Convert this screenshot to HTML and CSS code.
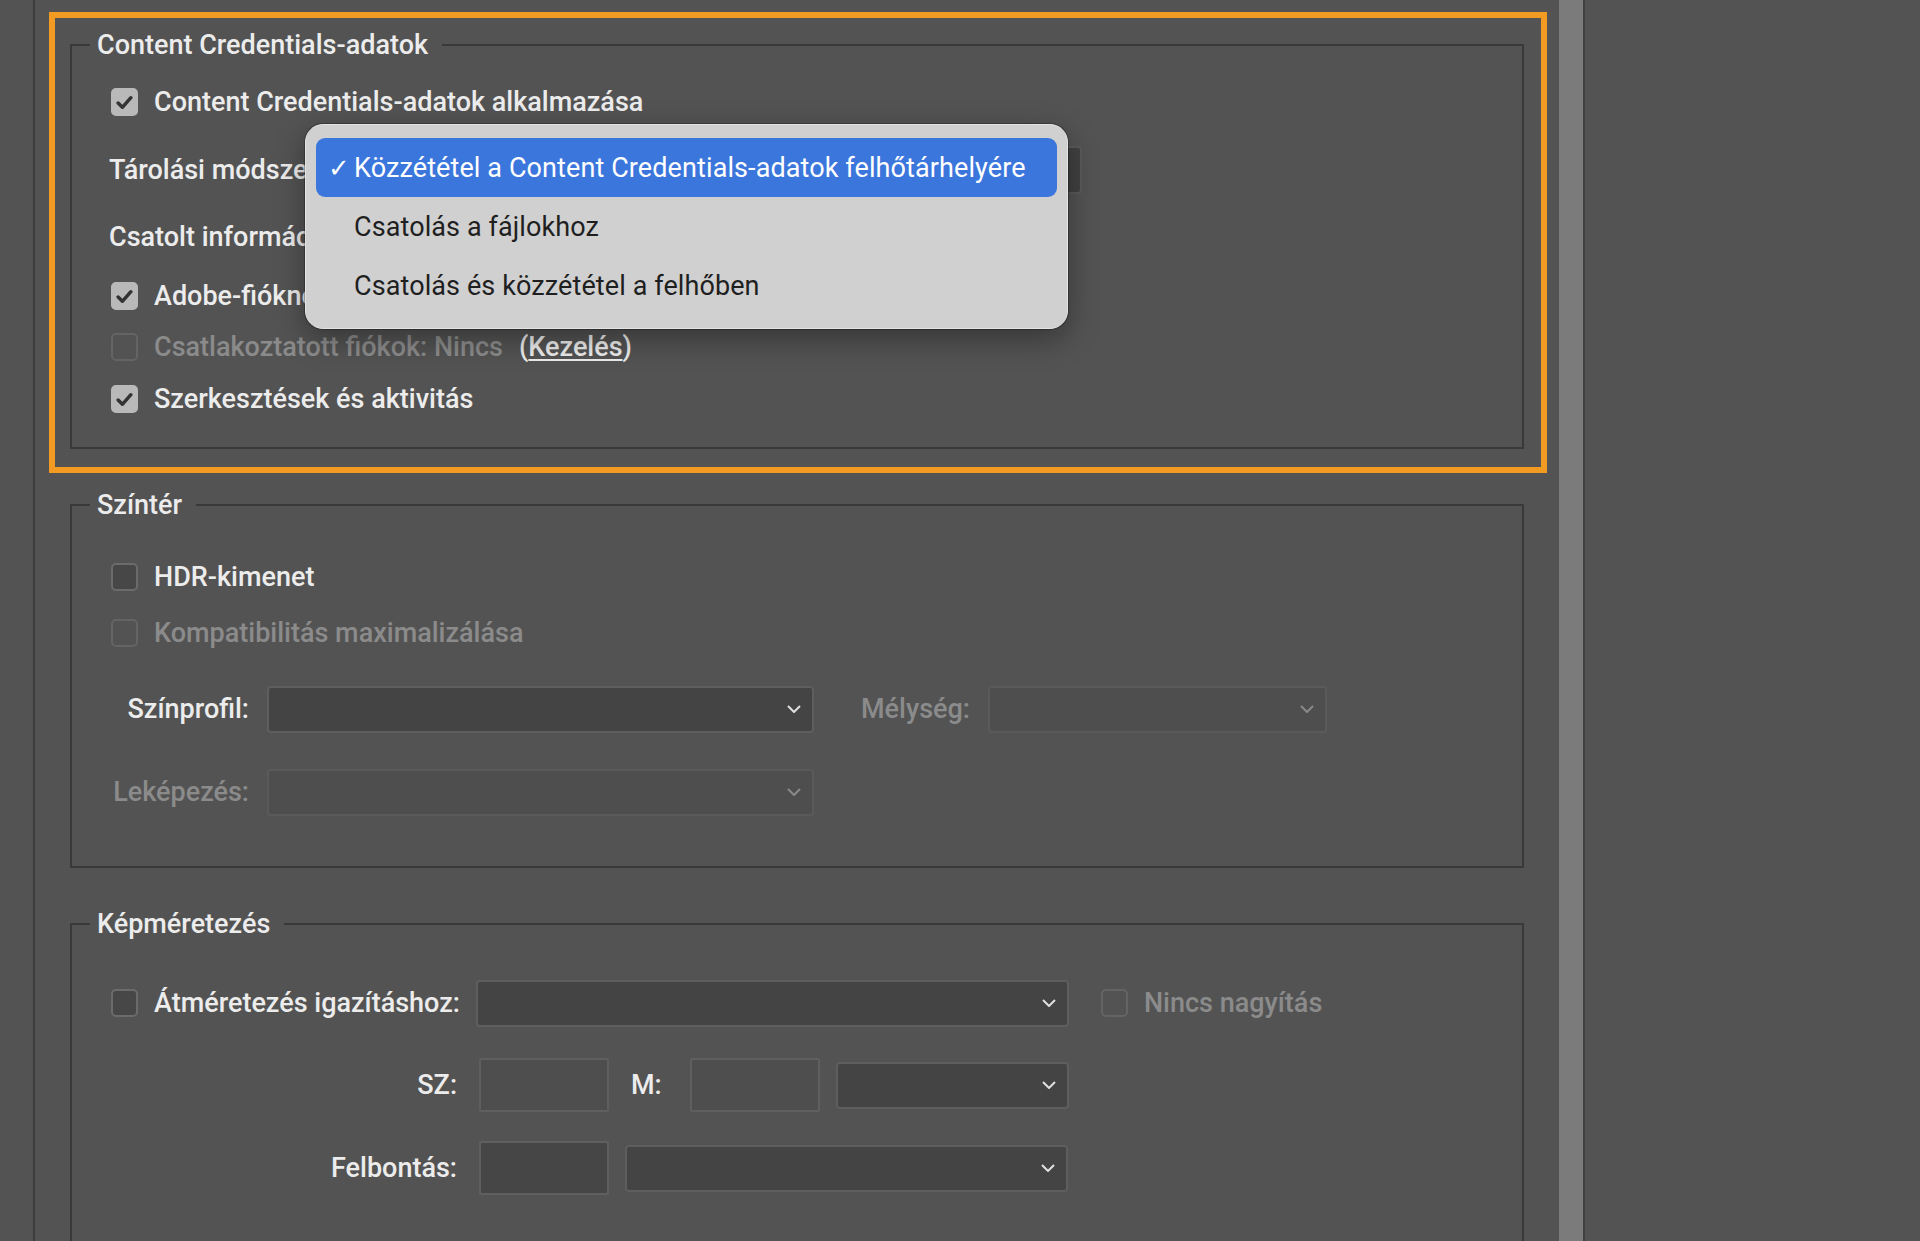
FILE: index.html
```html
<!DOCTYPE html>
<html lang="hu">
<head>
    <meta charset="UTF-8">
    <meta name="viewport" content="width=device-width, initial-scale=1.0">
    <title>Exportálási beállítások</title>
    <link rel="stylesheet" href="styles.css">
</head>
<body>
    <div class="app">
        <div class="gutter"></div>

        <div class="dialog">
            <div class="highlight">
                <fieldset class="group first">
                    <legend>Content Credentials-adatok</legend>
                    <div class="rows">
                        <div class="row r1">
                            <span class="box checked"><svg viewBox="0 0 16 14"><path d="M2 7.5 L6 11.5 L14 2.5"/></svg></span>
                            Content Credentials-adatok alkalmazása
                        </div>
                        <div class="row r2">
                            <span class="row-label">Tárolási módszer:</span>
                            <div class="popup"></div>
                        </div>
                        <div class="row r3">
                            <span class="row-label">Csatolt információk:</span>
                        </div>
                        <div class="row r4">
                            <span class="box checked"><svg viewBox="0 0 16 14"><path d="M2 7.5 L6 11.5 L14 2.5"/></svg></span>
                            Adobe-fióknév
                        </div>
                        <div class="row r5">
                            <span class="box off"></span>
                            <span class="disabled">Csatlakoztatott fiókok: Nincs</span>
                            <span class="manage">(<u>Kezelés</u>)</span>
                        </div>
                        <div class="row r6">
                            <span class="box checked"><svg viewBox="0 0 16 14"><path d="M2 7.5 L6 11.5 L14 2.5"/></svg></span>
                            Szerkesztések és aktivitás
                        </div>
                    </div>
                </fieldset>

                <!-- a Tárolási módszer legördülő menüje, nyitva -->
                <div class="menu">
                    <div class="menu-item selected"><span class="tick">✓</span>Közzététel a Content Credentials-adatok felhőtárhelyére</div>
                    <div class="menu-item"><span class="tick"></span>Csatolás a fájlokhoz</div>
                    <div class="menu-item"><span class="tick"></span>Csatolás és közzététel a felhőben</div>
                </div>
            </div>

            <fieldset class="group section">
                <legend>Színtér</legend>
                <div class="rows">
                    <div class="row hdr">
                        <span class="box"></span>
                        HDR-kimenet
                    </div>
                    <div class="row compat">
                        <span class="box off"></span>
                        <span class="disabled">Kompatibilitás maximalizálása</span>
                    </div>
                    <div class="row field profile">
                        <span class="field-label">Színprofil:</span>
                        <div class="select profile-select"><svg class="chev" viewBox="0 0 14 8"><path d="M1 1 L7 7 L13 1"/></svg></div>
                        <span class="depth-label disabled">Mélység:</span>
                        <div class="select off depth-select"><svg class="chev" viewBox="0 0 14 8"><path d="M1 1 L7 7 L13 1"/></svg></div>
                    </div>
                    <div class="row field mapping">
                        <span class="field-label disabled">Leképezés:</span>
                        <div class="select off profile-select"><svg class="chev" viewBox="0 0 14 8"><path d="M1 1 L7 7 L13 1"/></svg></div>
                    </div>
                </div>
            </fieldset>

            <fieldset class="group section last">
                <legend>Képméretezés</legend>
                <div class="rows">
                    <div class="row field fit">
                        <span class="box"></span>
                        Átméretezés igazításhoz:
                        <div class="select fit-select"><svg class="chev" viewBox="0 0 14 8"><path d="M1 1 L7 7 L13 1"/></svg></div>
                        <span class="box off no-zoom"></span>
                        <span class="disabled">Nincs nagyítás</span>
                    </div>
                    <div class="row size">
                        <span class="size-label">SZ:</span>
                        <div class="input"></div>
                        <span class="m-label">M:</span>
                        <div class="input m-input"></div>
                        <div class="select unit-select"><svg class="chev" viewBox="0 0 14 8"><path d="M1 1 L7 7 L13 1"/></svg></div>
                    </div>
                    <div class="row size res">
                        <span class="size-label">Felbontás:</span>
                        <div class="input dark"></div>
                        <div class="select res-select"><svg class="chev" viewBox="0 0 14 8"><path d="M1 1 L7 7 L13 1"/></svg></div>
                    </div>
                </div>
            </fieldset>
        </div>

        <div class="scrollbar"></div>
        <div class="side"></div>
    </div>
</body>
</html>
```

FILE: styles.css
```css
body {
    margin: 0;
    background-color: #535353;
    font-family: Roboto, "Liberation Sans", sans-serif;
    font-size: 27px;
    font-weight: 500;
    color: #ececec;
}

.app {
    display: flex;
    height: 1241px;
    overflow: hidden;
}

.gutter {
    flex: none;
    width: 33px;
    border-right: 2px solid #3d3d3d;
}

.dialog {
    flex: none;
    width: 1524px;
    padding-top: 12px;
    box-sizing: border-box;
}

.scrollbar {
    flex: none;
    width: 24px;
    background: #7b7b7b;
    border-right: 2px solid #414141;
}

.side {
    flex: 1;
}

/* narancs kiemelés */
.highlight {
    position: relative;
    width: 1498px;
    margin-left: 14px;
    box-sizing: border-box;
    border: 6px solid #f29a22;
    padding: 12px 17px 18px 15px;
}

.group {
    margin: 0;
    padding: 0 0 28px 0;
    border: 2px solid #393939;
    min-width: 0;
}

.group legend {
    margin-left: 18px;
    padding: 0 14px 0 7px;
    line-height: 30px;
}

.section {
    width: 1454px;
    margin: 17px 0 0 35px;
    padding-bottom: 50px;
    box-sizing: border-box;
}

.section + .section {
    margin-top: 41px;
}

.section.last {
    padding-bottom: 120px;
}

.rows {
    padding-left: 37px;
}

.row {
    display: flex;
    align-items: center;
    height: 40px;
    white-space: nowrap;
}

.r1 { margin-top: 22px; }
.r2 { margin-top: 24px; height: 48px; }
.r3 { margin-top: 23px; }
.r4 { margin-top: 19px; }
.r5 { margin-top: 11px; }
.r6 { margin-top: 12px; }

.row-label {
    width: 225px;
}

.popup {
    width: 734px;
    height: 48px;
    margin-left: 14px;
    box-sizing: border-box;
    background: #414141;
    border: 2px solid #5a5a5a;
    border-radius: 4px;
}

.box {
    flex: none;
    display: flex;
    align-items: center;
    justify-content: center;
    width: 27px;
    height: 28px;
    margin: 0 16px 0 2px;
    box-sizing: border-box;
    border: 2px solid #6b6b6b;
    border-radius: 5px;
    background: #474747;
}

.box.checked {
    background: #b9b9b9;
    border-color: #b9b9b9;
}

.box.off {
    background: transparent;
    border-color: #646464;
}

.box svg {
    width: 17px;
    height: 15px;
    fill: none;
    stroke: #333;
    stroke-width: 3.2;
    stroke-linecap: round;
    stroke-linejoin: round;
}

.disabled {
    color: #8b8b8b;
}

.manage {
    margin-left: 16px;
}

.manage u {
    text-underline-offset: 3px;
    text-decoration-thickness: 2px;
}

/* legördülő menü */
.menu {
    position: absolute;
    left: 250px;
    top: 106px;
    width: 763px;
    height: 205px;
    box-sizing: border-box;
    padding: 13px 10px;
    background: #d0d0d0;
    border: 1px solid #e3e3e3;
    border-radius: 18px;
    box-shadow: 0 0 0 1px rgba(0, 0, 0, 0.25), 0 10px 30px rgba(0, 0, 0, 0.35);
}

.menu-item {
    display: flex;
    align-items: center;
    height: 59px;
    padding-left: 12px;
    border-radius: 9px;
    color: #1f1f1f;
    font-weight: 400;
    letter-spacing: 0.1px;
    white-space: nowrap;
}

.menu-item .tick {
    width: 26px;
    font-family: "DejaVu Sans", sans-serif;
    font-size: 26px;
    font-weight: 700;
}

.menu-item.selected {
    background: #3b76dc;
    color: #fff;
}

/* mezők */
.hdr { margin-top: 37px; }
.compat { margin-top: 16px; }
.profile { margin-top: 32px; height: 48px; }
.mapping { margin-top: 35px; height: 48px; }

.field-label {
    width: 140px;
    text-align: right;
}

.select {
    flex: none;
    display: flex;
    align-items: center;
    justify-content: flex-end;
    height: 47px;
    padding-right: 11px;
    box-sizing: border-box;
    background: #444;
    border: 2px solid #5e5e5e;
    border-radius: 4px;
}

.select.off {
    background: #4e4e4e;
    border-color: #5a5a5a;
}

.chev {
    width: 14px;
    height: 8px;
    fill: none;
    stroke: #e0e0e0;
    stroke-width: 2;
}

.select.off .chev {
    stroke: #8a8a8a;
}

.profile-select {
    width: 547px;
    margin-left: 18px;
}

.depth-label {
    margin-left: 47px;
}

.depth-select {
    width: 339px;
    margin-left: 18px;
}

.fit {
    margin-top: 40px;
    height: 48px;
}

.fit-select {
    width: 593px;
    margin-left: 16px;
}

.no-zoom {
    margin-left: 32px;
}

.size {
    margin-top: 31px;
    height: 54px;
}

.size.res {
    margin-top: 29px;
}

.size-label {
    width: 348px;
    text-align: right;
}

.input {
    flex: none;
    width: 130px;
    height: 54px;
    margin-left: 22px;
    box-sizing: border-box;
    background: #4e4e4e;
    border: 2px solid #5f5f5f;
    border-radius: 2px;
}

.input.dark {
    background: #464646;
}

.m-label {
    margin-left: 22px;
}

.m-input {
    margin-left: 28px;
}

.unit-select {
    width: 233px;
    margin-left: 16px;
}

.res-select {
    width: 443px;
    margin-left: 16px;
}
```
